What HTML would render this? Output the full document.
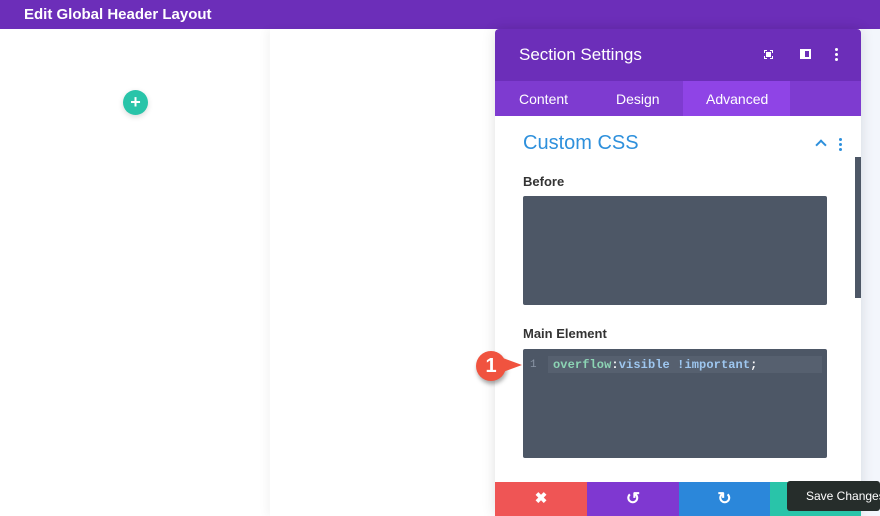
<!DOCTYPE html>
<html><head><style>
body{margin:0;width:880px;height:516px;overflow:hidden;background:#fff;font-family:"Liberation Sans",sans-serif;position:relative}
.abs{position:absolute}
.dot{position:absolute;width:3px;height:3px;border-radius:50%}
</style></head><body>
<div class="abs" style="left:0;top:0;width:880px;height:29px;background:#6c2eb9"></div>
<div class="abs" style="left:24px;top:6px;color:#fff;font-size:15px;font-weight:bold">Edit Global Header Layout</div>
<div class="abs" style="left:270px;top:29px;width:610px;height:487px;background:#fff;box-shadow:-4px 0 8px rgba(0,0,0,0.04)"></div>
<div class="abs" style="left:861px;top:29px;width:19px;height:487px;background:#f3f6fc"></div>
<div class="abs" style="left:123px;top:90px;width:25px;height:25px;border-radius:50%;background:#29c4a9;color:#fff;font-weight:bold;font-size:18px;line-height:25px;text-align:center;box-shadow:0 2px 6px rgba(0,0,0,.15)">+</div>
<div class="abs" style="left:495px;top:29px;width:366px;height:487px;background:#fff;box-shadow:0 0 14px rgba(0,0,0,.12);border-radius:4px 4px 0 0;overflow:hidden">
 <div class="abs" style="left:0;top:0;width:366px;height:52px;background:#6c2eb9"></div>
 <div class="abs" style="left:24px;top:16px;color:#fff;font-size:17px">Section Settings</div>
 <div class="abs" style="left:269px;top:21px;width:9px;height:9px;border:1.5px dashed #fff;box-sizing:border-box"></div>
 <div class="abs" style="left:271px;top:23px;width:5px;height:5px;background:#fff"></div>
 <div class="abs" style="left:305px;top:20px;width:11px;height:10px;border:2px solid #fff;box-sizing:border-box;border-left-width:5px"></div>
 <div class="dot" style="left:340px;top:19px;background:#fff"></div>
 <div class="dot" style="left:340px;top:24px;background:#fff"></div>
 <div class="dot" style="left:340px;top:29px;background:#fff"></div>
 <div class="abs" style="left:0;top:52px;width:366px;height:35px;background:#7e3bd0"></div>
 <div class="abs" style="left:188px;top:52px;width:107px;height:35px;background:#8f44e6"></div>
 <div class="abs" style="left:24px;top:62px;color:#fff;font-size:14px">Content</div>
 <div class="abs" style="left:121px;top:62px;color:#fff;font-size:14px">Design</div>
 <div class="abs" style="left:211px;top:62px;color:#fff;font-size:14px">Advanced</div>
 <div class="abs" style="left:28px;top:103px;color:#2e90dc;font-size:20px">Custom CSS</div>
 <div class="abs" style="left:322px;top:112px;width:6px;height:6px;border-left:2.5px solid #2e90dc;border-top:2.5px solid #2e90dc;transform:rotate(45deg)"></div>
 <div class="dot" style="left:344px;top:109px;background:#2e90dc"></div>
 <div class="dot" style="left:344px;top:114px;background:#2e90dc"></div>
 <div class="dot" style="left:344px;top:119px;background:#2e90dc"></div>
 <div class="abs" style="left:360px;top:128px;width:6px;height:141px;background:#4d5766"></div>
 <div class="abs" style="left:28px;top:145px;color:#333;font-size:13px;font-weight:bold">Before</div>
 <div class="abs" style="left:28px;top:167px;width:304px;height:109px;background:#4d5766;border-radius:2px"></div>
 <div class="abs" style="left:28px;top:297px;color:#333;font-size:13px;font-weight:bold">Main Element</div>
 <div class="abs" style="left:28px;top:320px;width:304px;height:109px;background:#4d5766;border-radius:2px"></div>
 <div class="abs" style="left:53px;top:327px;width:274px;height:17px;background:#56606f"></div>
 <div class="abs" style="left:35px;top:330px;color:#8a95a5;font-family:'Liberation Mono',monospace;font-size:11px">1</div>
 <div class="abs" style="left:58px;top:329px;font-family:'Liberation Mono',monospace;font-size:12px;font-weight:bold;letter-spacing:0.1px;color:#8cd4b4">overflow<span style="color:#fff">:</span><span style="color:#9ec7f0">visible !important</span><span style="color:#fff">;</span></div>
 <div class="abs" style="left:0;top:453px;width:92px;height:34px;background:#ef5555;color:#fff;text-align:center;line-height:34px;font-size:15px;font-weight:bold">✖</div>
 <div class="abs" style="left:92px;top:453px;width:92px;height:34px;background:#7f38d1;color:#fff;text-align:center;line-height:34px;font-size:17px;font-weight:bold">↺</div>
 <div class="abs" style="left:184px;top:453px;width:91px;height:34px;background:#2b87da;color:#fff;text-align:center;line-height:34px;font-size:17px;font-weight:bold">↻</div>
 <div class="abs" style="left:275px;top:453px;width:91px;height:34px;background:#29c4a9"></div>
</div>
<div class="abs" style="left:476px;top:351px;width:30px;height:30px;border-radius:50%;background:#f0533f;box-shadow:1px 3px 4px rgba(0,0,0,.35);color:#fff;font-size:20px;font-weight:bold;line-height:30px;text-align:center">1</div>
<div class="abs" style="left:500px;top:357px;width:0;height:0;border-top:8px solid transparent;border-bottom:8px solid transparent;border-left:22px solid #f0533f"></div>
<div class="abs" style="left:787px;top:481px;width:93px;height:30px;background:#262d2b;border-radius:3px;color:#fff;font-size:12px;line-height:30px;padding-left:19px;box-sizing:border-box;white-space:nowrap;overflow:hidden">Save Changes</div>
</body></html>
